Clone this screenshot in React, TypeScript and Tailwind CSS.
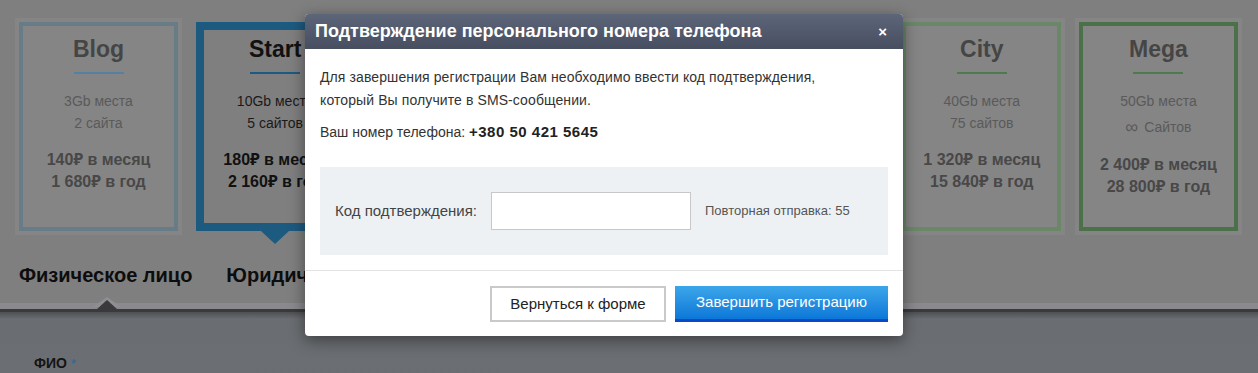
import React from 'react';

type Plan = {
    name: string;
    space: string;
    sites: string;
    month: string;
    year: string;
    tone: 'blue' | 'active' | 'green' | 'darkgreen';
    infinite?: boolean;
};

const plans: Plan[] = [
    { name: 'Blog', space: '3Gb места', sites: '2 сайта', month: '140₽ в месяц', year: '1 680₽ в год', tone: 'blue' },
    { name: 'Start', space: '10Gb места', sites: '5 сайтов', month: '180₽ в месяц', year: '2 160₽ в год', tone: 'active' },
    { name: 'Optima', space: '15Gb места', sites: '15 сайтов', month: '390₽ в месяц', year: '4 680₽ в год', tone: 'blue' },
    { name: 'Profi', space: '20Gb места', sites: '30 сайтов', month: '590₽ в месяц', year: '7 080₽ в год', tone: 'blue' },
    { name: 'Business', space: '30Gb места', sites: '50 сайтов', month: '890₽ в месяц', year: '10 680₽ в год', tone: 'green' },
    { name: 'City', space: '40Gb места', sites: '75 сайтов', month: '1 320₽ в месяц', year: '15 840₽ в год', tone: 'green' },
    { name: 'Mega', space: '50Gb места', sites: 'Сайтов', month: '2 400₽ в месяц', year: '28 800₽ в год', tone: 'darkgreen', infinite: true },
];

function PlanCard({ plan }: { plan: Plan }) {
    const active = plan.tone === 'active';
    const border =
        plan.tone === 'active' ? 'border-[8px] border-[#1d5a80]'
        : plan.tone === 'blue' ? 'border-[4px] border-[#687c87]'
        : plan.tone === 'green' ? 'border-[4px] border-[#6a8868]'
        : 'border-[4px] border-[#4c7049]';

    return (
        <div className={`relative w-[167px] h-[217px] p-[4px] ${active ? '' : 'bg-[#858585]'}`}>
            <div className={`h-full flex flex-col items-center ${border} ${active ? 'pt-[5px]' : 'pt-[9px]'}`}>
                <h3 className={`text-[23px] leading-[28px] font-bold ${active ? 'text-[#111]' : 'text-[#454545]'}`}>{plan.name}</h3>
                <div className={`mt-[9px] w-[50px] h-[2px] ${plan.tone === 'green' || plan.tone === 'darkgreen' ? 'bg-[#4f7a4c]' : active ? 'bg-[#1d5a80]' : 'bg-[#54819f]'}`} />
                <div className={`mt-[16px] text-[14px] leading-[22px] text-center ${active ? 'text-[#1a1a1a]' : 'text-[#5a5a5a]'}`}>
                    <p>{plan.space}</p>
                    {plan.infinite ? (
                        <p className="mt-[4px] flex items-center justify-center gap-[6px]">
                            <span className="text-[18px] leading-[22px]">∞</span>
                            <span>{plan.sites}</span>
                        </p>
                    ) : (
                        <p>{plan.sites}</p>
                    )}
                </div>
                <div className={`${plan.infinite ? 'mt-[16px]' : 'mt-[15px]'} text-[16px] leading-[22px] font-bold text-center ${active ? 'text-[#111]' : 'text-[#484848]'}`}>
                    <p>{plan.month}</p>
                    <p>{plan.year}</p>
                </div>
            </div>
            {active && (
                <div className="absolute left-1/2 -translate-x-1/2 top-[213px] w-0 h-0 border-l-[14px] border-r-[14px] border-t-[13px] border-l-transparent border-r-transparent border-t-[#1d5a80]" />
            )}
        </div>
    );
}

export default function App() {
    return (
        <div className="relative w-[1258px] h-[373px] overflow-hidden bg-[#7f7f7f] font-['Liberation_Sans','Noto_Sans',sans-serif]">
            <div className="flex justify-between pl-[15px] pr-[16px] pt-[18px]">
                {plans.map(plan => <PlanCard key={plan.name} plan={plan} />)}
            </div>

            <div className="flex gap-[34px] pl-[19px] pt-[26px] h-[68px] text-[20px] leading-[28px] font-bold text-[#0d0d0d]">
                <span>Физическое лицо</span>
                <span>Юридическое лицо</span>
            </div>

            <div className="relative">
                <div className="h-[6px] bg-[#8a8a8e]" />
                <div className="h-[3px] bg-[#3a3a3c]" />
                <div className="absolute left-[93px] top-[-6px] w-0 h-0 border-l-[14px] border-r-[14px] border-b-[10px] border-l-transparent border-r-transparent border-b-[#8e8e93]" />
                <div className="absolute left-[97px] top-[-3px] w-0 h-0 border-l-[10px] border-r-[10px] border-b-[9px] border-l-transparent border-r-transparent border-b-[#3a3a3c]" />
            </div>

            <div className="h-[70px] bg-gradient-to-b from-[#4e5053] via-[#6a6d71] via-[10%] to-[#6b6e72] pl-[34px] pt-[42px] leading-[18px]">
                <span className="text-[14px] font-bold text-[#141414]">ФИО</span>
                <span className="ml-[4px] text-[13px] text-[#2a6896]">*</span>
            </div>

            <div className="absolute left-[305px] top-[14px] w-[598px] bg-white rounded-[4px] shadow-[0_4px_16px_rgba(0,0,0,0.45)] overflow-hidden">
                <div className="h-[35px] flex items-center justify-between pl-[10px] pr-[16px] bg-gradient-to-b from-[#5d6579] to-[#474e60]">
                    <h2 className="text-[18px] font-bold text-white">Подтверждение персонального номера телефона</h2>
                    <span className="text-white text-[15px] font-bold leading-none">×</span>
                </div>

                <div className="px-[15px] pt-[17px] pb-[15px]">
                    <p className="text-[14px] leading-[23px] text-[#333] tracking-[0.1px]">
                        Для завершения регистрации Вам необходимо ввести код подтверждения,<br />
                        который Вы получите в SMS-сообщении.
                    </p>
                    <p className="mt-[8px] text-[14px] leading-[23px] text-[#333]">
                        Ваш номер телефона: <b className="text-[15px] tracking-[0.5px] text-[#222]">+380 50 421 5645</b>
                    </p>

                    <div className="mt-[23px] h-[88px] bg-[#eef1f4] flex items-center pl-[15px]">
                        <label className="text-[15px] text-[#444]">Код подтверждения:</label>
                        <input className="ml-[14px] w-[200px] h-[38px] bg-white border border-[#c8c8c8] outline-none" />
                        <span className="ml-[14px] text-[13px] text-[#555]">Повторная отправка: 55</span>
                    </div>
                </div>

                <div className="border-t border-[#e3e3e3] flex justify-end gap-[9px] px-[15px] pt-[15px] pb-[14px]">
                    <button className="w-[176px] h-[36px] bg-white border-2 border-[#c9c9c9] text-[15px] text-[#222]">
                        Вернуться к форме
                    </button>
                    <button className="w-[213px] h-[36px] bg-gradient-to-b from-[#3ca6ea] to-[#0a77d8] border-b-[3px] border-[#0b48c8] text-[15px] text-white">
                        Завершить регистрацию
                    </button>
                </div>
            </div>
        </div>
    );
}
